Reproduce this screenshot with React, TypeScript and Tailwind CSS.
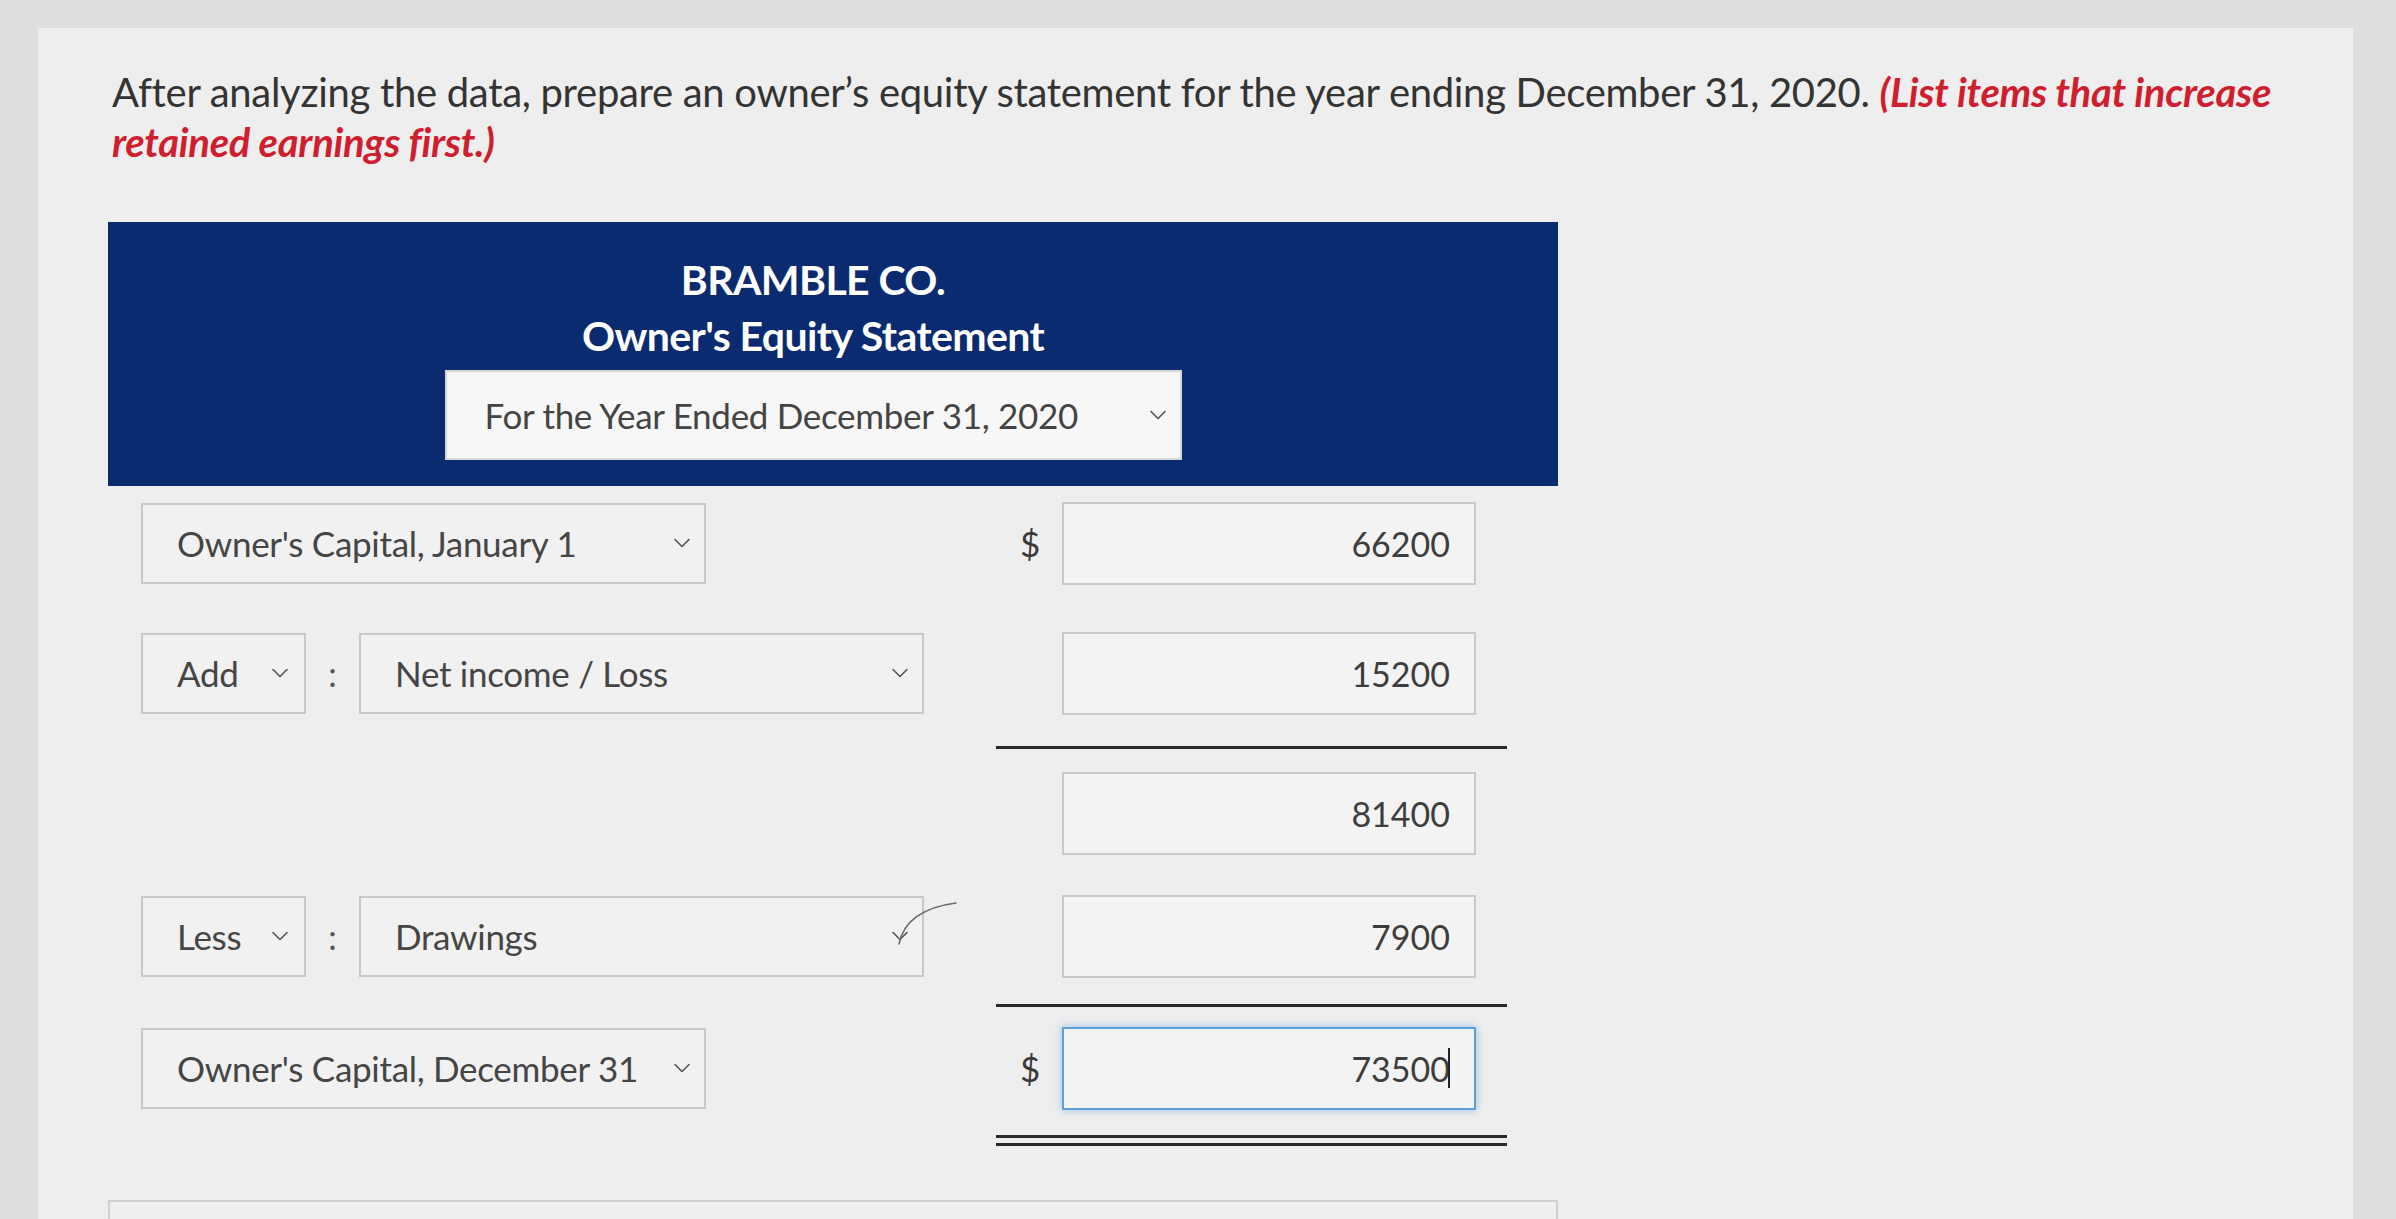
import { ChevronDown } from "lucide-react";

const font = { fontFamily: "Lato, 'Open Sans', sans-serif" };

function Dropdown({ label, width, chevronRight = "right-[8px]" }: { label: string; width: string; chevronRight?: string }) {
  return (
    <div className={`relative flex items-center h-[81px] ${width} border-2 border-[#c8c8c8] bg-[#f1f1f1] pl-[34px] text-[35px] text-[#454545]`}>
      <span className="tracking-[-0.3px]">{label}</span>
      <ChevronDown className={`absolute ${chevronRight} top-1/2 -translate-y-1/2 text-[#555]`} size={28} strokeWidth={1.4} />
    </div>
  );
}

function Amount({ value, dollar = false, focused = false }: { value: string; dollar?: boolean; focused?: boolean }) {
  return (
    <div className="flex items-center w-[511px]">
      <div className="w-[66px] pl-[24px] text-[35px] text-[#3a3a3a]">{dollar ? "$" : ""}</div>
      <div
        className={`flex items-center justify-end h-[83px] w-[414px] pr-[24px] text-[34px] text-[#3d3d3d] bg-[#f3f3f3] border-2 ${
          focused ? "border-[#5d9fd8] shadow-[0_0_8px_rgba(80,150,220,0.55)]" : "border-[#c9c9c9]"
        }`}
      >
        <span>{value}</span>
        {focused && <span className="-ml-[2px] h-[40px] w-[2px] bg-[#222]" />}
      </div>
    </div>
  );
}

function Colon() {
  return <div className="w-[53px] text-center text-[34px] text-[#555]">:</div>;
}

export default function App() {
  return (
    <div className="w-[2396px] h-[1219px] overflow-hidden bg-[#dedede] pl-[38px] pt-[28px]" style={font}>
      <div className="relative w-[2315px] h-[1300px] bg-[#eeeeee]">
        {/* question */}
        <p className="absolute left-[74px] top-[39px] w-[2190px] text-[40px] leading-[50px] text-[#333] tracking-[-0.3px]">
          After analyzing the data, prepare an owner’s equity statement for the year ending December 31, 2020.{" "}
          <span className="font-bold italic text-[#cf1f2f]">(List items that increase retained earnings first.)</span>
        </p>

        <div className="absolute left-[70px] top-[194px] w-[1450px]">
          {/* header */}
          <div className="flex flex-col items-center h-[264px] bg-[#0a2b70] pt-[30px] pr-[40px]">
            <div className="text-[41px] leading-[56px] font-bold text-white tracking-[-0.6px]">BRAMBLE CO.</div>
            <div className="text-[41px] leading-[56px] font-bold text-white tracking-[-0.6px]">Owner's Equity Statement</div>
            <div className="relative mt-[6px] flex items-center h-[90px] w-[737px] bg-[#f7f7f7] border-2 border-[#d5d5d5] pl-[38px] text-[35px] text-[#444]">
              <span className="tracking-[-0.3px]">For the Year Ended December 31, 2020</span>
              <ChevronDown className="absolute right-[8px] top-1/2 -translate-y-1/2 text-[#555]" size={28} strokeWidth={1.4} />
            </div>
          </div>

          {/* rows */}
          <div className="pl-[33px] pt-[14px]">
            <div className="flex items-center h-[86px]">
              <div className="w-[855px]">
                <Dropdown label="Owner's Capital, January 1" width="w-[565px]" />
              </div>
              <Amount value="66200" dollar />
            </div>

            <div className="flex items-center h-[86px] mt-[44px]">
              <div className="flex items-center w-[855px]">
                <Dropdown label="Add" width="w-[165px]" chevronRight="right-[10px]" />
                <Colon />
                <Dropdown label="Net income / Loss" width="w-[565px]" />
              </div>
              <Amount value="15200" />
            </div>
            <div className="ml-[855px] mt-[30px] h-[3px] w-[511px] bg-[#2a2a2a]" />

            <div className="flex items-center h-[86px] mt-[21px]">
              <div className="w-[855px]" />
              <Amount value="81400" />
            </div>

            <div className="flex items-center h-[86px] mt-[37px]">
              <div className="relative flex items-center w-[855px]">
                <Dropdown label="Less" width="w-[165px]" chevronRight="right-[10px]" />
                <Colon />
                <Dropdown label="Drawings" width="w-[565px]" />
                <svg className="absolute left-[755px] top-[4px]" width="64" height="48" viewBox="0 0 64 48" fill="none">
                  <path d="M3 44 C 7 24, 22 8, 60 3" stroke="#6b6b6b" strokeWidth="1.6" strokeLinecap="round" />
                </svg>
              </div>
              <Amount value="7900" />
            </div>
            <div className="ml-[855px] mt-[25px] h-[3px] w-[511px] bg-[#2a2a2a]" />

            <div className="flex items-center h-[86px] mt-[18px]">
              <div className="w-[855px]">
                <Dropdown label="Owner's Capital, December 31" width="w-[565px]" />
              </div>
              <Amount value="73500" dollar focused />
            </div>
            <div className="ml-[855px] mt-[24px] h-[3px] w-[511px] bg-[#2a2a2a]" />
            <div className="ml-[855px] mt-[5px] h-[3px] w-[511px] bg-[#2a2a2a]" />
          </div>

          {/* next panel edge */}
          <div className="mt-[54px] h-[40px] border-2 border-[#d0d0d0] bg-[#efefef]" />
        </div>
      </div>
    </div>
  );
}
